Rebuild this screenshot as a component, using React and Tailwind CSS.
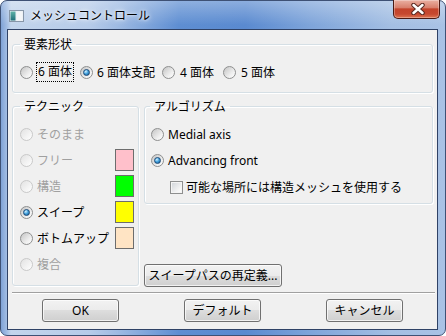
import React from "react";

const F = "font-['Segoe_UI','Noto_Sans','Noto_Sans_CJK_JP',sans-serif]";

function Radio({ checked, disabled }) {
  return (
    <span
      className={`flex h-[13px] w-[13px] shrink-0 items-center justify-center rounded-full border ${
        disabled
          ? "border-[#c9c9c9] bg-[linear-gradient(135deg,#e2e2e2,#f6f6f6_70%,#ffffff)]"
          : "border-[#8e8f8f] bg-[linear-gradient(135deg,#c4c4c4,#efefef_65%,#ffffff)]"
      }`}
    >
      {checked && (
        <span className="h-[7px] w-[7px] rounded-full border border-[#1b4a78] bg-[radial-gradient(circle_at_35%_30%,#d4f1ff_0%,#48a6e0_45%,#0e4f8a_100%)]" />
      )}
    </span>
  );
}

function Group({ label, legendClass, className, children }) {
  return (
    <fieldset
      className={`rounded-[3px] border border-[#d5dfe5] shadow-[inset_1px_1px_0_#ffffff,1px_1px_0_#ffffff] ${className}`}
    >
      <legend className={`px-[4px] text-[12px] leading-[15px] text-black ${legendClass}`}>{label}</legend>
      {children}
    </fieldset>
  );
}

function Btn({ children, className }) {
  return (
    <div
      className={`flex h-[23px] items-center justify-center rounded-[3px] border border-[#707070] bg-[linear-gradient(to_bottom,#f2f2f2_0%,#ebebeb_50%,#dddddd_50%,#cfcfcf_100%)] shadow-[inset_0_0_0_1px_rgba(255,255,255,0.7)] text-[12px] leading-[15px] text-black ${className}`}
    >
      {children}
    </div>
  );
}

function TechRow({ label, disabled, checked, color }) {
  return (
    <div className="flex h-[26px] items-center">
      <Radio checked={checked} disabled={disabled} />
      <span className={`ml-[4px] text-[12px] leading-[15px] ${disabled ? "text-[#a0a0a0]" : "text-black"}`}>{label}</span>
      {color && <span className={`ml-auto mr-[4px] h-[22px] w-[19px] border border-[#6d6d6d] ${color}`} />}
    </div>
  );
}

export default function App() {
  return (
    <div className={`h-[336px] w-[446px] bg-white ${F}`}>
      <div className="flex h-[336px] w-[446px] flex-col rounded-[7px] border border-[#3e5175] bg-[linear-gradient(to_bottom,rgba(255,255,255,0.3),rgba(255,255,255,0)_24px),linear-gradient(to_right,#7fa2d6_0px,#a3bee4_6px,#c3d5ec_10px,#b6cbe9_20%,#9fbbe3_26%,#5e8ed2_40%,#5a8ad0_55%,#7fa5da_70%,#a4bfe3_88%,#a9c2e5_100%)] pb-[5px] pl-[6px] pr-[7px]">
        {/* title bar */}
        <div className="flex h-[28px] items-center">
          <svg width="15" height="12" viewBox="0 0 15 12" className="ml-[2px] mt-[2px]">
            <rect x="0.5" y="0.5" width="14" height="11" fill="#e8eef4" stroke="#8796a8" />
            <rect x="1.5" y="1.5" width="5" height="9" fill="url(#g)" />
            <rect x="7.5" y="1.5" width="6" height="9" fill="#f4f6f8" />
            <defs>
              <linearGradient id="g" x1="0" y1="0" x2="0" y2="1">
                <stop offset="0" stopColor="#5fb3a8" />
                <stop offset="1" stopColor="#1f6f7a" />
              </linearGradient>
            </defs>
          </svg>
          <span className="ml-[6px] mt-[1px] text-[12px] leading-[15px] text-black [text-shadow:0_0_6px_#ffffff,0_0_3px_#ffffff]">
            メッシュコントロール
          </span>
          <div className="-mr-[2px] -mt-[1px] ml-auto flex h-[19px] w-[47px] items-center justify-center self-start rounded-b-[5px] border border-t-0 border-[#4a1a14] bg-[linear-gradient(to_bottom,#eab0a2_0%,#d8806d_42%,#c3432b_50%,#c64830_78%,#de7552_100%)] shadow-[inset_0_0_0_1px_rgba(255,255,255,0.3)]">
            <svg width="14" height="12" viewBox="0 0 14 12" className="ml-[2px]">
              <path d="M2.5 2 L11.5 10 M11.5 2 L2.5 10" stroke="#5a2a22" strokeWidth="4.5" strokeLinecap="round" />
              <path d="M2.5 2 L11.5 10 M11.5 2 L2.5 10" stroke="#ffffff" strokeWidth="2.5" strokeLinecap="round" />
            </svg>
          </div>
        </div>

        {/* client */}
        <div className="flex flex-1 flex-col border border-[#2f4266] bg-[#f0f0f0] pl-[4px] pt-[7px] text-black">
          <Group label="要素形状" legendClass="ml-[7px]" className="h-[56px] w-[421px]">
            <div className="flex items-center pl-[7px] pt-[10px]">
              <div className="flex h-[20px] w-[60px] items-center">
                <Radio />
                <span className="ml-[3px] border border-dotted border-black px-[1px] text-[12px] leading-[18px]">6 面体</span>
              </div>
              <div className="flex h-[20px] w-[82px] items-center">
                <Radio checked />
                <span className="ml-[4px] text-[12px] leading-[15px]">6 面体支配</span>
              </div>
              <div className="flex h-[20px] w-[61px] items-center">
                <Radio />
                <span className="ml-[5px] text-[12px] leading-[15px]">4 面体</span>
              </div>
              <div className="flex h-[20px] items-center">
                <Radio />
                <span className="ml-[5px] text-[12px] leading-[15px]">5 面体</span>
              </div>
            </div>
          </Group>

          <div className="mt-[6px] flex">
            <Group label="テクニック" legendClass="ml-[7px]" className="h-[187px] w-[127px]">
              <div className="flex flex-col pl-[7px] pt-[7px]">
                <TechRow label="そのまま" disabled />
                <TechRow label="フリー" disabled color="bg-[#ffc0cb]" />
                <TechRow label="構造" disabled color="bg-[#00ff00]" />
                <TechRow label="スイープ" checked color="bg-[#ffff00]" />
                <TechRow label="ボトムアップ" color="bg-[#ffe4c4]" />
                <TechRow label="複合" disabled />
              </div>
            </Group>

            <div className="ml-[5px] flex w-[289px] flex-col">
              <Group label="アルゴリズム" legendClass="ml-[5px]" className="h-[105px] w-[289px]">
                <div className="flex flex-col pl-[6px] pt-[7px]">
                  <div className="flex h-[26px] items-center">
                    <Radio />
                    <span className="ml-[4px] text-[12px] leading-[15px]">Medial axis</span>
                  </div>
                  <div className="flex h-[27px] items-center">
                    <Radio checked />
                    <span className="ml-[4px] text-[12px] leading-[15px]">Advancing front</span>
                  </div>
                  <div className="flex h-[26px] items-center pl-[19px]">
                    <span className="h-[13px] w-[13px] shrink-0 border border-[#8e8f8f] bg-[linear-gradient(135deg,#cfd3d8,#f4f4f4_70%,#ffffff)] shadow-[inset_0_0_0_1px_#f4f4f4]" />
                    <span className="ml-[3px] text-[12px] leading-[15px]">可能な場所には構造メッシュを使用する</span>
                  </div>
                </div>
              </Group>
              <Btn className="mb-[-1px] mt-auto w-[138px]">スイープパスの再定義...</Btn>
            </div>
          </div>

          <div className="mt-[6px] w-[423px] border-b border-t border-b-white border-t-[#a0a0a0]" />

          <div className="mt-[5px] flex gap-[65px] pl-[30px]">
            <Btn className="w-[77px]">OK</Btn>
            <Btn className="w-[77px]">デフォルト</Btn>
            <Btn className="w-[77px]">キャンセル</Btn>
          </div>
        </div>
      </div>
    </div>
  );
}
